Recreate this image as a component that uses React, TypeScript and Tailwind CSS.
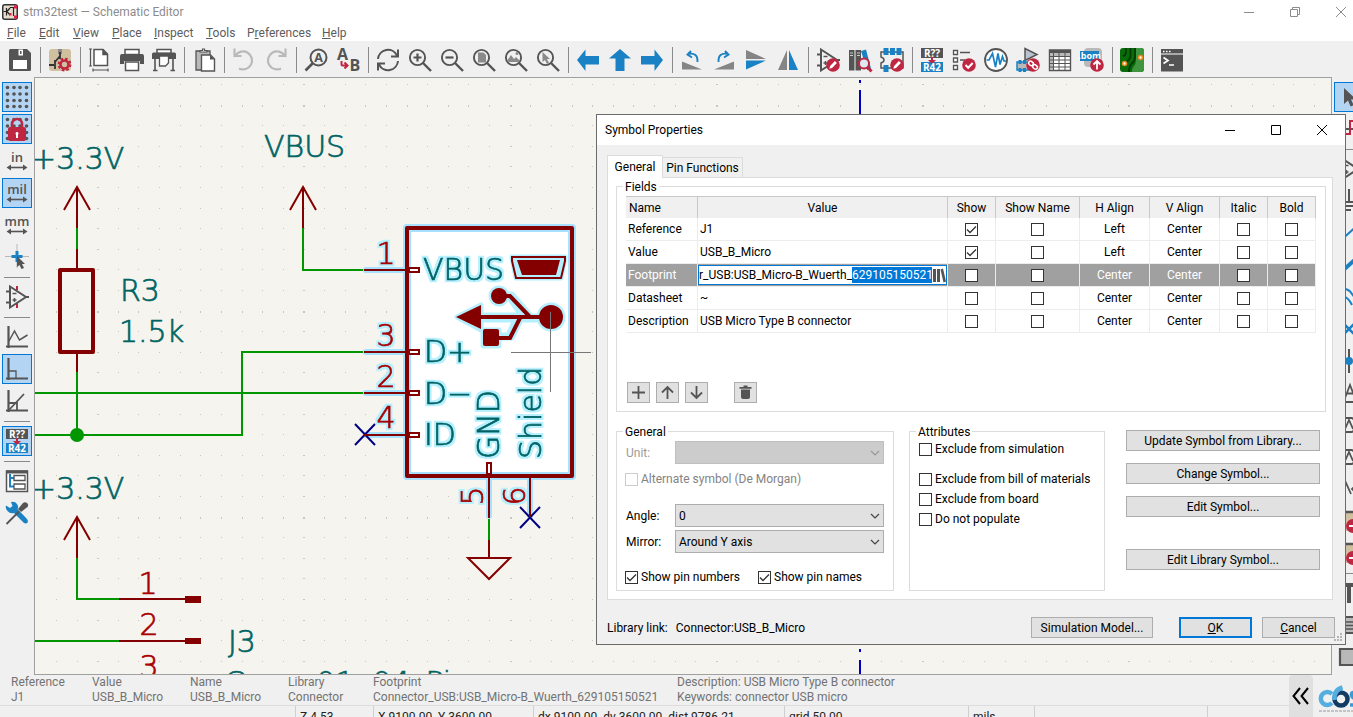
import React, { useEffect, useRef } from "react";

const G = "#545454";
const B = "#1a81c4";
const R = "#bf2641";
const L = "#b9b9b9";

/* ---------- icon drawings, 24 x 24 ---------- */

const lens = (
  <g fill="none" stroke={G} strokeWidth="1.9">
    <circle cx="9.5" cy="9.5" r="7.6" />
    <path d="M15 15l8 8" strokeWidth="2.4" />
  </g>
);
const badge = <circle cx="17" cy="17" r="6.8" fill={R} />;
const pencil = <path d="M13.3 20.7l.8-2.8 4.8-4.8 2 2-4.8 4.8z" fill="#fff" />;
const annotate = (
  <g>
    <rect x="1" y="0" width="22" height="10" fill={G} />
    <rect x="1" y="14" width="22" height="10" fill={B} />
    <path d="M11 9h2v3h3l-4 4-4-4h3z" fill={R} />
    <text x="12" y="8.7" fontSize="10" fontWeight="700" fill="#fff" textAnchor="middle" fontFamily="Open Sans, sans-serif">R??</text>
    <text x="12" y="22.8" fontSize="10" fontWeight="700" fill="#fff" textAnchor="middle" fontFamily="Open Sans, sans-serif">R42</text>
  </g>
);
const cursor = <path d="M7 3v16l4-3.5 2.6 6 3-1.3-2.6-5.8h5.2z" fill={G} />;
const dots = [3, 9.5, 15.5, 22].flatMap((x) =>
  [3, 9.5, 16, 22].map((y) => <circle key={x + "-" + y} cx={x - 0.5} cy={y - 0.5} r="1.8" fill={G} />)
);
const unit = (t: string) => (
  <g>
    <text x="12" y="13" fontSize="13" fontWeight="600" fill={G} textAnchor="middle" fontFamily="Open Sans, sans-serif">{t}</text>
    <path d="M4 18.5h16" stroke={G} strokeWidth="1.6" />
    <path d="M1.5 18.5l4.5-3v6zM22.5 18.5l-4.5-3v6z" fill={G} />
  </g>
);
const opamp = (
  <g fill="none" stroke={G} strokeWidth="2">
    <path d="M5 1.5v21L21 12z" />
    <path d="M1 6.5h4M1 17.5h4M21 12h3" />
    <path d="M7.5 8.5h4M7.5 15h4M9.5 13v4" strokeWidth="1.5" />
  </g>
);
const axes = <path d="M3.5 1v22M1 21.5h22" fill="none" stroke={G} strokeWidth="2.2" />;

const icons: Record<string, React.ReactNode> = {
  save: (
    <g>
      <path d="M2.5 1H19l4 4v16.5q0 1.5-1.5 1.5h-19Q1 23 1 21.5v-19Q1 1 2.5 1z" fill={G} />
      <path d="M10.5 1.5h4.5v6h-4.5z" fill="#fff" />
      <path d="M12 3h1.5v3H12z" fill={G} />
      <path d="M5 12h14v9H5z" fill="#fff" />
    </g>
  ),
  setup: (
    <g>
      <rect x="1" y="1" width="22" height="22" rx="3" fill="#cfc09f" />
      <path d="M10 1h4v5h-4z" fill="#8a8a8a" />
      <path d="M12 4v7M1 17h5M7 12v9M12 8l-5 6" stroke="#333" strokeWidth="1.8" />
      <circle cx="16.5" cy="16.5" r="4" fill="none" stroke={R} strokeWidth="2.6" />
      <circle cx="16.5" cy="16.5" r="5.8" fill="none" stroke={R} strokeWidth="2.2" strokeDasharray="2.5 2.05" />
    </g>
  ),
  page: (
    <g fill="none" stroke={G} strokeWidth="1.5">
      <path d="M6 1.5h9l4.5 4.5v11.5H6z" fill="#fff" />
      <path d="M15 1.5v5h4.5" fill={G} />
      <path d="M2.5 1v17M1 1h3M1 18h3M5 22h15M5 20.5v3M20 20.5v3" strokeWidth="1.2" />
    </g>
  ),
  print: (
    <g>
      <path d="M5 1.5h14v5H5z" fill="#fff" stroke={G} strokeWidth="1.5" />
      <path d="M2 6h20q2 0 2 2v8h-4v-3H4v3H0V8q0-2 2-2z" fill={G} />
      <path d="M5.5 14h13v8.5h-13z" fill="#fff" stroke={G} strokeWidth="1.5" />
    </g>
  ),
  plot: (
    <g>
      <path d="M5 1.5h14v4H5z" fill="#fff" stroke={G} strokeWidth="1.5" />
      <path d="M1.5 4.500h21Q24 4.500 24 6v5H0V6q0-1.500 1.500-1.500z" fill={G} />
      <path d="M7.5 8h9v7l-3 3h-6z" fill="#fff" stroke={G} strokeWidth="1.3" />
      <path d="M3 11v11M21 11v11M1 22.5h4.5M18.5 22.5H23" stroke={G} strokeWidth="1.6" />
    </g>
  ),
  paste: (
    <g>
      <path d="M4 3h14v19H4z" fill={L} stroke={G} strokeWidth="1.3" />
      <path d="M8 4V2.5h2.500V1h2v1.500H15V4z" fill="#fff" stroke={G} strokeWidth="1.2" />
      <path d="M9.5 7h9l4 4v12h-13z" fill="#fff" stroke={G} strokeWidth="1.4" />
      <path d="M18 7v4.5h4.5z" fill={G} />
    </g>
  ),
  undo: <path d="M2.5 0.5v7.5h7M3.5 7.5A9 9 0 1 1 7 20.5" fill="none" stroke={L} strokeWidth="2.2" />,
  redo: <path d="M21.5 0.5v7.5h-7M20.5 7.5A9 9 0 1 0 17 20.5" fill="none" stroke={L} strokeWidth="2.2" />,
  find: (
    <g>
      <circle cx="14.5" cy="9.5" r="8" fill="none" stroke={G} strokeWidth="2" />
      <path d="M9 15l-7.5 7.5" stroke={G} strokeWidth="2.6" />
      <text x="14.5" y="14" fontSize="12.5" fontWeight="700" fill={G} textAnchor="middle" fontFamily="Open Sans, sans-serif">A</text>
    </g>
  ),
  replace: (
    <g>
      <text x="1" y="11.5" fontSize="16" fontWeight="700" fill={G} fontFamily="Open Sans, sans-serif">A</text>
      <text x="13.5" y="23" fontSize="16" fontWeight="700" fill={G} fontFamily="Open Sans, sans-serif">B</text>
      <path d="M5.5 13v3.5q0 1 1 1H11M8.5 14.5l3 3-3 3" fill="none" stroke={R} strokeWidth="2" />
    </g>
  ),
  refresh: (
    <g fill="none" stroke={G} strokeWidth="2">
      <path d="M2 11A10 10 0 0 1 21 7.5M22 1.5V8.5h-7M22 13A10 10 0 0 1 3 16.5M2 22.5V15.5h7" />
    </g>
  ),
  zin: <g>{lens}<path d="M5.5 9.5h8M9.5 5.5v8" stroke={G} strokeWidth="2.2" /></g>,
  zout: <g>{lens}<path d="M5.5 9.5h8" stroke={G} strokeWidth="2.2" /></g>,
  zfit: <g>{lens}<path d="M6 4.5h5.5l2.5 2.5v7.5H6z" fill="#8a8a8a" /></g>,
  zobj: <g>{lens}<path d="M3 13l4-6 3 4 2-2 4 4q-1 1-2 1H5z" fill="#8a8a8a" /><circle cx="13" cy="5.5" r="1.5" fill="#8a8a8a" /></g>,
  zsel: <g>{lens}<path d="M6.5 4v10l2.5-2 2 4 2-1-2-4h3z" fill="#8a8a8a" /></g>,
  left: <path d="M1 12L9.5 1.5V8H23v8.5H9.5v6.5z" fill={B} />,
  up: <path d="M12 1L23 10.5h-6.5V23h-9V10.5H1z" fill={B} />,
  right: <path d="M23 12L14.5 1.5V8H1v8.5h13.5v6.5z" fill={B} />,
  ccw: <g><path d="M2 13.5v8h20z" fill="#858585" /><path d="M8 6q10-2 9.5 8M11 3L7.5 6.5 12 9.5" fill="none" stroke={B} strokeWidth="1.9" /></g>,
  cw: <g><path d="M22 13.5v8H2z" fill="#858585" /><path d="M16 6Q6 4 6.5 14M13 3l3.5 3.5L12 9.5" fill="none" stroke={B} strokeWidth="1.9" /></g>,
  mv: <g><path d="M2 2v9h20z" fill="#858585" /><path d="M2 21.5v-9h20z" fill={B} /></g>,
  mh: <g><path d="M2 22h9V2z" fill="#858585" /><path d="M22 22h-9V2z" fill={B} /></g>,
  symed: <g>{opamp}{badge}{pencil}</g>,
  browse: (
    <g>
      <path d="M1 2h5.5v20.5H1zM7.5 2H13v20.5H7.5z" fill={G} />
      <path d="M2 5h3M2 7.5h3M9 5h3M9 7.5h3" stroke="#ccc" />
      <path d="M13 3l5-1.5 5 19-4 1.5z" fill={B} />
      <circle cx="16" cy="15.5" r="5" fill="#dfe9f3" stroke={R} strokeWidth="2" />
      <path d="M19.5 19l4 4.5" stroke={R} strokeWidth="3" />
    </g>
  ),
  fped: (
    <g>
      <path d="M1 4h22v16H1v-5q3-1 3-3t-3-3z" fill="none" stroke={G} strokeWidth="1.5" />
      <path d="M3.5 0h5v7h-5zM10 0h5v7h-5zM16.5 0h5v7h-5zM3.5 17h5v7h-5z" fill={B} />
      {badge}{pencil}
    </g>
  ),
  annotate,
  erc: (
    <g>
      <path d="M1.5 2.5h4v4h-4zM1.5 10h4v4h-4zM1.5 17.5h4v4h-4z" fill="#fff" stroke={G} strokeWidth="1.3" />
      <path d="M8 4.5h10M8 12h5" stroke={G} strokeWidth="1.5" />
      {badge}<path d="M13.5 17l2.7 2.7 4.5-4.7" fill="none" stroke="#fff" strokeWidth="2" />
    </g>
  ),
  sim: (
    <g>
      <circle cx="12" cy="12" r="11" fill="#fff" stroke={G} strokeWidth="1.8" />
      <path d="M2.5 12h2.5L8.5 5.5 11.5 19 14 5.5l2 11 2.5-8 1.5 4.5h2" fill="none" stroke={B} strokeWidth="1.7" />
    </g>
  ),
  assign: (
    <g>
      <path d="M9 0.5v12L21 6.5z" fill="#b9c3cf" stroke={G} strokeWidth="1.5" />
      <path d="M1 14h15v8H1z" fill={L} stroke={B} strokeWidth="1.5" />
      <path d="M2.5 12h3v4h-3zM7 12h3v4H7zM2.5 20h3v4h-3zM7 20h3v4H7z" fill={B} />
      {badge}
      <g fill="none" stroke="#fff" strokeWidth="1.5"><rect x="12.5" y="13.5" width="5" height="3.8" rx="1.9" transform="rotate(40 15 15.4)" /><rect x="16.5" y="17" width="5" height="3.8" rx="1.9" transform="rotate(40 19 19)" /></g>
    </g>
  ),
  table: (
    <g>
      <path d="M1.5 2h21v20.5h-21z" fill="#fff" stroke={G} strokeWidth="1.4" />
      <path d="M2 2h20v3H2z" fill={G} />
      <path d="M2 5h20v3H2zM2 5h3v17H2z" fill={L} />
      <path d="M1.5 8.5h21M1.5 12h21M1.5 15.5h21M1.5 19h21M5.5 5v17M11 5v17M17 5v17" stroke={G} />
    </g>
  ),
  bom: (
    <g>
      <rect x="4" y="0" width="18" height="19" rx="4" fill={L} />
      <rect x="0" y="3" width="19" height="10" fill={B} />
      <text x="9.5" y="11" fontSize="9" fontWeight="700" fill="#fff" textAnchor="middle" fontFamily="Open Sans, sans-serif">.bom</text>
      {badge}<path d="M17 21.5v-8M13.5 16.5l3.5-3.5 3.5 3.5" fill="none" stroke="#fff" strokeWidth="1.8" />
    </g>
  ),
  pcb: (
    <g>
      <rect x="0" y="0" width="24" height="24" rx="3" fill="#0a6b0a" />
      <path d="M16 0h5q3 0 3 3v18q0 3-3 3h-9q0-4 2-6t2-6z" fill="#3f953f" />
      <path d="M6 0v4q0 3-3 4.5M10.5 0v7q0 4-3 6T4 17M15 0v9q0 4-3 6.5T9 24" fill="none" stroke="#023d02" strokeWidth="1.8" />
      <circle cx="4.5" cy="15.5" r="2" fill="#fff" stroke="#e8881a" strokeWidth="1.6" />
      <circle cx="20.5" cy="9.5" r="2" fill="#fff" stroke="#e8881a" strokeWidth="1.6" />
    </g>
  ),
  term: (
    <g>
      <path d="M1 1h22v22.5H1z" fill={G} />
      <path d="M1 6h22" stroke="#fff" />
      <path d="M3 3.5h1.5M6 3.5h1.5M9 3.5h1.5" stroke="#fff" strokeWidth="1.5" />
      <path d="M3.5 9.5l4.5 3-4.5 3M9 17h5" fill="none" stroke="#fff" strokeWidth="1.7" />
    </g>
  ),
  grid: <g>{dots}</g>,
  lock: (
    <g>
      {dots}
      <path d="M7 10V7a5 5 0 0 1 10 0v4" fill="none" stroke={R} strokeWidth="2.6" />
      <rect x="3" y="10" width="18" height="14" rx="2" fill={R} />
      <path d="M12 15a1.5 1.5 0 0 1 1 2.6V21h-2v-3.4A1.5 1.5 0 0 1 12 15z" fill="#fff" />
    </g>
  ),
  in: unit("in"),
  mil: unit("mil"),
  mm: unit("mm"),
  cross: (
    <g>
      <path d="M12 -1v24M0 11.5h24" stroke={L} />
      <path d="M12 6v11M6.5 11.5h11" stroke={B} strokeWidth="3" />
      <path d="M12 11v11l2.5-2 2 4 2.5-1-2-4h3z" fill={G} />
    </g>
  ),
  pins: <g><path d="M12 1v4M12 18v5" stroke={R} strokeWidth="2" />{opamp}</g>,
  free: <g>{axes}<path d="M4 16l5.5-10 5 9 8-5" fill="none" stroke={G} strokeWidth="1.5" /></g>,
  ninety: <g>{axes}<path d="M4 14h7v7" fill="none" stroke={G} strokeWidth="1.3" /></g>,
  fortyfive: <g>{axes}<path d="M4 21L19 5M4 14h8v7" fill="none" stroke={G} strokeWidth="1.8" /></g>,
  hier: (
    <g>
      <rect x="1.5" y="2" width="21" height="20.5" fill="#fff" stroke={G} strokeWidth="1.5" />
      <path d="M1 1.5h22v3H1z" fill={G} />
      <path d="M5 5v12.5h4M5 9h4" fill="none" stroke={B} strokeWidth="2" />
      <path d="M9 6.5h11v5H9zM9 15h11v5H9z" fill="#fff" stroke={G} strokeWidth="1.3" />
    </g>
  ),
  tools: (
    <g>
      <path d="M1 4.5l4 2.500 2.500-2L6 1q4-1 6 2t.5 5l9.500 10q1.500 2 .5 3.500t-3.500.5L9 12q-4 1-6.500-2T1 4.500z" fill={B} />
      <path d="M1.5 23L14 10.5" stroke={G} strokeWidth="1.8" />
      <path d="M13 8l5-6q2-1.5 4 0t.5 4L16 11z" fill={G} />
    </g>
  ),
  select: cursor,
  wave: <g fill="none"><path d="M0 12h24" stroke={G} strokeWidth="2" /><path d="M8 17h5V4H22" stroke={R} strokeWidth="2" /></g>,
  sym: opamp,
  pwr: <path d="M12 0v12M1 13h18M4 17h14M8 21h6" stroke={G} strokeWidth="2" />,
  wire: <path d="M2 21L22 3" stroke={B} strokeWidth="2" />,
  bus: <path d="M2 21L22 3" stroke={B} strokeWidth="4" />,
  entry: <path d="M1 4h6q5 0 8 5t8 5M1 12h6q4 0 8 8" fill="none" stroke={B} strokeWidth="2" />,
  nc: <path d="M6 6l12 12M18 6L6 18" stroke={B} strokeWidth="2.5" />,
  junction: <g><path d="M12 0v24" stroke={G} strokeWidth="2" /><circle cx="12" cy="12" r="4" fill={B} /></g>,
  label: <path d="M8 17l5-13 5 13M10 12.5h6M1 21h22" fill="none" stroke={G} strokeWidth="1.8" />,
  glabel: <path d="M1 5h14l8 7-8 7H1M8 16l4-9 4 9" fill="none" stroke={G} strokeWidth="1.8" />,
  hlabel: <path d="M22 5l-7 7 7 7M5 17L9 6l5 11" fill="none" stroke={G} strokeWidth="1.8" />,
  sheet: (
    <g>
      <rect x="0" y="2" width="24" height="20" fill="#cfc09f" />
      <path d="M0 3h24" stroke={G} strokeWidth="2.5" />
      <circle cx="16" cy="17" r="7" fill={R} />
      <path d="M12 17h8" stroke="#fff" strokeWidth="2" />
    </g>
  ),
  text: <path d="M2 4h20M12 4v18" stroke={G} strokeWidth="4" />,
  textbox: <g><path d="M1 4h22v16H1z" fill={L} stroke={G} strokeWidth="2" /><path d="M5 9h14M5 12.5h14M5 16h14" stroke={G} strokeWidth="1.5" /></g>,
  rect: <path d="M3 4h22v16H3z" fill={L} stroke={G} strokeWidth="2.2" />,
};

function Icon({ name }: { name: string }) {
  return (
    <svg viewBox="0 0 24 24" className="h-6 w-6 shrink-0 overflow-visible" aria-hidden="true">
      {icons[name]}
    </svg>
  );
}

const topTools =
  "save | setup | page print plot | paste | undo redo | find replace | refresh zin zout zfit zobj zsel | left up right | ccw cw mv mh | symed browse fped | annotate erc sim assign table bom | pcb | term".split(" ");
const leftTools =
  "grid lock in mil mm cross | pins | free ninety fortyfive | annotate | hier tools".split(" ");
const rightTools =
  "select wave | sym pwr wire bus entry nc junction label glabel glabel hlabel sheet sheet | text textbox rect".split(" ");
const activeTools = ["grid", "lock", "mil", "ninety", "annotate", "select"];

function SideBar({ tools, name }: { tools: string[]; name: string }) {
  return (
    <nav aria-label={name} className="flex w-[34px] shrink-0 flex-col items-center pt-1">
      {tools.map((t, i) =>
        t === "|" ? (
          <div key={i} className="flex h-2 w-full shrink-0 items-center px-1">
            <hr className="w-full border-[#8a8a8a]" />
          </div>
        ) : (
          <button
            key={i}
            aria-label={t}
            className={
              "my-px flex h-[30px] w-[30px] shrink-0 items-center justify-center border " +
              (activeTools.includes(t) ? "border-[#0078d7] bg-[#b3d5f3]" : "border-transparent")
            }
          >
            <Icon name={t} />
          </button>
        )
      )}
    </nav>
  );
}

/* ---------- schematic sheet ---------- */

const range = (n: number) => Array.from({ length: n }, (_, i) => i);

function GridDots() {
  return (
    <g fill="#c8c8c4" shapeRendering="crispEdges">
      {range(64).flatMap((i) =>
        range(30).map((j) => {
          const bx = (i + 8) % 10 === 0;
          const by = (j + 9) % 10 === 0;
          return (
            <rect
              key={i + "-" + j}
              x={Math.round(56 + i * 20.62)}
              y={Math.round(84 + j * 20.6)}
              width={bx ? 2 : 1}
              height={by ? 2 : 1}
            />
          );
        })
      )}
    </g>
  );
}

type LabelProps = { x: number; y: number; children: string; num?: boolean; turn?: boolean; halo?: boolean; mid?: boolean };

function Label({ x, y, children, num, turn, halo, mid }: LabelProps) {
  const colour = num ? "#a90000" : "#006464";
  return (
    <g filter={halo ? "url(#halo)" : undefined}>
      <text
        x={x}
        y={y}
        fontSize="30"
        fontWeight="200"
        textAnchor={mid ? "middle" : "start"}
        fill={colour}
        stroke={colour}
        strokeWidth="0.7"
        transform={turn ? `rotate(-90 ${x} ${y})` : undefined}
      >
        {children}
      </text>
    </g>
  );
}

function PowerArrow({ x, y }: { x: number; y: number }) {
  return <path d={`M${x} ${y + 41}V${y}M${x - 13} ${y + 23}L${x} ${y}l13 23`} stroke="#840000" strokeWidth="2" fill="none" />;
}

function Schematic() {
  return (
    <svg className="absolute inset-0 h-full w-full" fontFamily="DejaVu Sans, sans-serif" aria-label="Schematic sheet">
      <defs>
        <filter id="halo" x="-30%" y="-30%" width="160%" height="160%" colorInterpolationFilters="sRGB">
          <feMorphology in="SourceAlpha" operator="dilate" radius="2" result="fat" />
          <feFlood floodColor="#b4efff" />
          <feComposite in2="fat" operator="in" result="glow" />
          <feMerge>
            <feMergeNode in="glow" />
            <feMergeNode in="SourceGraphic" />
          </feMerge>
        </filter>
      </defs>
      <g transform="translate(-35 -78)">
        <GridDots />
        <path d="M860 80v3M860 90v550M860 649v3M860 660v20" stroke="#0000c0" strokeWidth="2" />
        <g fill="none" stroke="#009600" strokeWidth="2">
          <path d="M77 227v22M77 372v63M35 393h329M35 435h207v-83h122M77 557v42h42M35 641h84M303 227v43h61M489 519v22" />
        </g>
        <circle cx="77" cy="435" r="7" fill="#009600" />
        <g fill="none" stroke="#840000" strokeWidth="2">
          <path d="M77 249v20M77 353v19M119 599h67M119 641h67M489 540v18M468 558h42l-21 21z" />
          <rect x="60" y="270" width="33" height="82" strokeWidth="4" strokeLinejoin="round" />
        </g>
        <path d="M185 596h16v7h-16zM185 638h16v6h-16z" fill="#840000" />
        <PowerArrow x={77} y={187} />
        <PowerArrow x={77} y={517} />
        <PowerArrow x={303} y={187} />

        <g stroke="#a6e2ff" fill="none" strokeLinecap="round">
          <rect x="407" y="228" width="165" height="248" strokeWidth="8" fill="#fff" strokeLinejoin="round" />
          <path d="M366 270h41M366 352h41M366 393h41M366 435h41M489 476v40M530 476v40" strokeWidth="6" />
        </g>
        <path d="M355 424l20 21M375 424l-20 21M520 507l20 21M540 507l-20 21" stroke="#000084" strokeWidth="2" />

        <Label x={386} y={264} num halo mid>1</Label>
        <Label x={386} y={346} num halo mid>3</Label>
        <Label x={386} y={387} num halo mid>2</Label>
        <Label x={386} y={428} num halo mid>4</Label>
        <Label x={483} y={496} num halo mid turn>5</Label>
        <Label x={525} y={496} num halo mid turn>6</Label>
        <Label x={423} y={280} halo>VBUS</Label>
        <Label x={424} y={362} halo>D+</Label>
        <Label x={424} y={404} halo>D−</Label>
        <Label x={424} y={445} halo>ID</Label>
        <Label x={499} y={459} halo turn>GND</Label>
        <Label x={541} y={459} halo turn>Shield</Label>

        <g stroke="#b4efff" strokeWidth="5" strokeLinejoin="round" fill="#b4efff">
          <path d="M512 257h53l-4 21h-45z" />
          <path d="M457 317l24-12v10h40l-12-17h-10v-4h13l19 22h10v4h-20l-9 18h-13v8h-16v-16h16v5h9l7-15h-34v10z" />
          <circle cx="499" cy="296" r="8" />
          <circle cx="551" cy="317" r="12" />
        </g>
        <g fill="#840000">
          <path d="M517 260h43l-4 15h-34z" />
          <path d="M456 317l25-12v24z" />
          <circle cx="499" cy="296" r="8" />
          <circle cx="551" cy="317" r="12" />
          <rect x="483" y="329" width="16" height="17" rx="2" />
        </g>
        <g fill="none" stroke="#840000">
          <path d="M512 257h53v4l-4 17h-45l-4-17z" strokeWidth="2" />
          <path d="M480 317h62M499 296h11l20 21M499 338h11l10-20" strokeWidth="4" />
          <path d="M364 270h43M364 352h43M364 393h43M364 435h43M489 476v42M530 476v41" strokeWidth="2" />
          <rect x="407" y="228" width="165" height="248" strokeWidth="4" strokeLinejoin="round" />
        </g>
        <path d="M409 268h10v4h-10zM409 350h10v4h-10zM409 391h10v4h-10zM409 433h10v4h-10zM487 463h4v11h-4z" fill="#fff" stroke="#840000" strokeWidth="2" />
        <path d="M550.5 312v80M511 352.5h80" stroke="#777" strokeWidth="1" />

        <Label x={31} y={169}>+3.3V</Label>
        <Label x={120} y={301}>R3</Label>
        <Label x={119} y={342}>1.5k</Label>
        <Label x={31} y={499}>+3.3V</Label>
        <Label x={264} y={157}>VBUS</Label>
        <Label x={148} y={594} num mid>1</Label>
        <Label x={149} y={635} num mid>2</Label>
        <Label x={149} y={677} num mid>3</Label>
        <Label x={228} y={652}>J3</Label>
        <Label x={224} y={693}>Conn_01x04_Pin</Label>
      </g>
    </svg>
  );
}

/* ---------- dialog ---------- */

function Tick({ on, off, label, id }: { on?: boolean; off?: boolean; label?: string; id?: string }) {
  return (
    <span className="relative inline-block h-[13px] w-[13px] shrink-0 align-middle">
      <input
        type="checkbox"
        id={id}
        aria-label={label}
        defaultChecked={on}
        disabled={off}
        className="peer block h-[13px] w-[13px] appearance-none border border-[#333] bg-white disabled:border-[#ccc]"
      />
      <svg viewBox="0 0 13 13" className="pointer-events-none absolute inset-0 hidden h-full w-full peer-checked:block">
        <path d="M2 6.5l3 3 6-6" fill="none" stroke="#333" strokeWidth="1.3" />
      </svg>
    </span>
  );
}

function CheckRow({ id, text, on, off }: { id: string; text: string; on?: boolean; off?: boolean }) {
  return (
    <span className="flex h-5 items-center gap-[3px]">
      <Tick id={id} on={on} off={off} />
      <label htmlFor={id} className={off ? "text-[#838383]" : ""}>{text}</label>
    </span>
  );
}

function Pick({ id, value, off }: { id: string; value: string; off?: boolean }) {
  return (
    <span className="relative block flex-1">
      <select
        id={id}
        disabled={off}
        defaultValue={value}
        className="block h-[23px] w-full appearance-none border border-[#adadad] bg-[#e1e1e1] pr-5 pl-[3px] disabled:border-[#bfbfbf] disabled:bg-[#ccc]"
      >
        <option>{value}</option>
      </select>
      <svg viewBox="0 0 10 6" className="pointer-events-none absolute top-[9px] right-1 h-[6px] w-[10px]">
        <path d="M1 1l4 4 4-4" fill="none" stroke={off ? "#999" : "#444"} strokeWidth="1.2" />
      </svg>
    </span>
  );
}

function Group({ title, className, children }: { title: string; className: string; children: React.ReactNode }) {
  return (
    <section className={"relative border border-[#dcdcdc] " + className}>
      <h2 className="absolute -top-2 left-[6px] bg-white px-[2px] leading-4">{title}</h2>
      {children}
    </section>
  );
}

const btn = "h-[21px] border border-[#adadad] bg-[#e1e1e1] text-center leading-[18px]";

function SmallButton({ label, children }: { label: string; children: React.ReactNode }) {
  return (
    <button aria-label={label} className="flex h-[21px] w-[23px] items-center justify-center border border-[#adadad] bg-[#e1e1e1]">
      <svg viewBox="0 0 16 16" className="h-4 w-4" fill="none" stroke={G} strokeWidth="1.8">{children}</svg>
    </button>
  );
}

const rows = [
  { name: "Reference", value: "J1", show: true, h: "Left" },
  { name: "Value", value: "USB_B_Micro", show: true, h: "Left" },
  { name: "Footprint", value: "r_USB:USB_Micro-B_Wuerth_629105150521", show: false, h: "Center", sel: true },
  { name: "Datasheet", value: "~", show: false, h: "Center" },
  { name: "Description", value: "USB Micro Type B connector", show: false, h: "Center" },
];

function FootprintEditor({ value }: { value: string }) {
  const ref = useRef<HTMLInputElement>(null);
  useEffect(() => {
    const el = ref.current;
    if (!el) return;
    el.focus({ preventScroll: true });
    el.setSelectionRange(value.indexOf("629"), value.length);
  }, [value]);
  return (
    <span className="flex h-5 items-center border border-[#0078d7] bg-white text-black">
      <input
        ref={ref}
        aria-label="Footprint value"
        defaultValue={value}
        spellCheck={false}
        className="h-4 min-w-0 flex-1 outline-none selection:bg-[#0078d7] selection:text-white"
      />
      <button aria-label="Browse footprints" className="shrink-0">
        <svg viewBox="1 0 14 15" className="block h-[15px] w-[14px]" fill={G}>
          <path d="M2 1h3v13H2zM6 1h3v13H6zM9.500 1.500l2.500-1 3 13-2.500 1z" />
        </svg>
      </button>
    </span>
  );
}

const heads = ["Name", "Value", "Show", "Show Name", "H Align", "V Align", "Italic", "Bold"];

function FieldsTable() {
  return (
    <table className="w-full table-fixed border-separate border-spacing-0 text-center">
      <colgroup>
        <col className="w-[72px]" />
        <col />
        <col className="w-12" />
        <col className="w-[84px]" />
        <col className="w-[70px]" />
        <col className="w-[70px]" />
        <col className="w-12" />
        <col className="w-12" />
      </colgroup>
      <thead>
        <tr>
          {heads.map((h, i) => (
            <th
              key={h}
              className={"h-[22px] border-t border-r border-[#c8c8c8] bg-[#f0f0f0] p-0 font-normal " + (i === 0 ? "pl-[3px] text-left" : "")}
            >
              {h}
            </th>
          ))}
        </tr>
      </thead>
      <tbody>
        {rows.map((r) => {
          const td = "h-[23px] border-r border-b border-[#ececec] p-0 leading-4 " + (r.sel ? "bg-[#a0a0a0] text-white" : "");
          return (
            <tr key={r.name}>
              <td className={td + " pl-[2px] text-left"}>{r.name}</td>
              <td className={td + " text-left"}>
                {r.sel ? <FootprintEditor value={r.value} /> : <span className="pl-[2px]">{r.value}</span>}
              </td>
              <td className={td}><Tick on={r.show} label={r.name + " show"} /></td>
              <td className={td}><Tick label={r.name + " show name"} /></td>
              <td className={td}>{r.h}</td>
              <td className={td}>Center</td>
              <td className={td}><Tick label={r.name + " italic"} /></td>
              <td className={td}><Tick label={r.name + " bold"} /></td>
            </tr>
          );
        })}
      </tbody>
    </table>
  );
}

function SymbolProperties() {
  return (
    <div role="dialog" aria-label="Symbol Properties" className="absolute top-[114px] left-[596px] w-[750px] border border-[#6b6b6b] bg-[#f0f0f0] text-black">
      <header className="flex h-[30px] items-center justify-between bg-white pr-[17px] pl-2">
        <h1>Symbol Properties</h1>
        <span className="flex gap-[34px]">
          {["M1 6.5h10", "M1.5 1.5h9v9h-9z", "M1 1l10 10M11 1L1 11"].map((d, i) => (
            <button key={d} aria-label={["Minimize", "Maximize", "Close"][i]}>
              <svg viewBox="0 0 12 12" className="h-3 w-3" fill="none" stroke="#000"><path d={d} /></svg>
            </button>
          ))}
        </span>
      </header>
      <div className="pt-[10px] pr-3 pl-[10px]">
        <div role="tablist" className="flex items-end">
          <button role="tab" aria-selected="true" className="relative -mb-px h-[23px] w-14 border border-b-0 border-[#dcdcdc] bg-white pb-px">General</button>
          <button role="tab" aria-selected="false" className="h-5 w-20 border border-b-0 border-l-0 border-[#dcdcdc]">Pin Functions</button>
        </div>
        <div className="border border-[#dcdcdc] bg-white py-2 pr-[6px] pl-2">
          <Group title="Fields" className="pt-[9px] pr-[9px] pb-2 pl-[9px]">
            <FieldsTable />
            <div className="mt-[49px] flex gap-[6px] pl-px">
              <SmallButton label="Add field"><path d="M7.5 1v13M1 7.5h13" /></SmallButton>
              <SmallButton label="Move up"><path d="M7.5 14V2M2 7.500L7.500 2l5.500 5.500" /></SmallButton>
              <SmallButton label="Move down"><path d="M7.5 1v12M2 7.500L7.500 13l5.500-5.500" /></SmallButton>
              <span className="ml-5">
                <SmallButton label="Delete field">
                  <path d="M3 4.5h9V12q0 2-2 2H5q-2 0-2-2z" fill={G} stroke="none" />
                  <path d="M1.5 2.8h12M5.500 1.500h4" />
                </SmallButton>
              </span>
            </div>
          </Group>
          <div className="mt-[19px] flex">
            <Group title="General" className="h-[160px] w-[278px] pt-[9px] pr-[9px] pl-2">
              <div className="flex items-center text-[#9a9a9a]">
                <label htmlFor="unit" className="w-[50px] pl-px">Unit:</label>
                <Pick id="unit" value="" off />
              </div>
              <div className="mt-[5px]"><CheckRow id="alt" text="Alternate symbol (De Morgan)" off /></div>
              <div className="mt-[15px] flex items-center">
                <label htmlFor="angle" className="w-[50px] pl-px">Angle:</label>
                <Pick id="angle" value="0" />
              </div>
              <div className="mt-[3px] flex items-center">
                <label htmlFor="mirror" className="w-[50px] pl-px">Mirror:</label>
                <Pick id="mirror" value="Around Y axis" />
              </div>
              <div className="mt-[14px] grid grid-cols-[133px_1fr]">
                <CheckRow id="pnum" text="Show pin numbers" on />
                <CheckRow id="pname" text="Show pin names" on />
              </div>
            </Group>
            <Group title="Attributes" className="ml-[15px] h-[160px] w-[196px] pt-[7px] pl-[9px]">
              <CheckRow id="xsim" text="Exclude from simulation" />
              <div className="mt-[10px]">
                <CheckRow id="xbom" text="Exclude from bill of materials" />
                <CheckRow id="xbrd" text="Exclude from board" />
                <CheckRow id="dnp" text="Do not populate" />
              </div>
            </Group>
            <div className="-mt-px mr-[6px] ml-[21px] flex flex-1 flex-col gap-3">
              <button className={btn}>Update Symbol from Library...</button>
              <button className={btn}>Change Symbol...</button>
              <button className={btn}>Edit Symbol...</button>
              <button className={btn + " mt-5"}>Edit Library Symbol...</button>
            </div>
          </div>
        </div>
      </div>
      <footer className="relative flex items-center pt-[17px] pr-[10px] pb-[6px] pl-[10px]">
        <span>Library link:</span>
        <span className="ml-2 flex-1">Connector:USB_B_Micro</span>
        <button className={btn + " w-[122px]"}>Simulation Model...</button>
        <button className="ml-[26px] h-[21px] w-[73px] border-2 border-[#0078d7] bg-[#e1e1e1] leading-4"><u>O</u>K</button>
        <button className={btn + " ml-[10px] w-[73px]"}><u>C</u>ancel</button>
        <svg viewBox="0 0 9 9" className="absolute right-[2px] bottom-[2px] h-[9px] w-[9px]" fill="#b5b5b5">
          <path d="M6 0h2v2H6zM3 3h2v2H3zM6 3h2v2H6zM0 6h2v2H0zM3 6h2v2H3zM6 6h2v2H6z" />
        </svg>
      </footer>
    </div>
  );
}

/* ---------- window ---------- */

const menus = [
  ["", "F", "ile", "w-8"],
  ["", "E", "dit", "w-[34px]"],
  ["", "V", "iew", "w-[39px]"],
  ["", "P", "lace", "w-[42px]"],
  ["", "I", "nspect", "w-[52px]"],
  ["", "T", "ools", "w-[41px]"],
  ["P", "r", "eferences", "w-[75px]"],
  ["", "H", "elp", "w-10"],
];

const facts = [
  ["Reference", "J1", "w-[81px]"],
  ["Value", "USB_B_Micro", "w-[98px]"],
  ["Name", "USB_B_Micro", "w-[98px]"],
  ["Library", "Connector", "w-[85px]"],
  ["Footprint", "Connector_USB:USB_Micro-B_Wuerth_629105150521", "w-[304px]"],
  ["Description: USB Micro Type B connector", "Keywords: connector USB micro", "flex-1"],
];

const status = [
  ["", "w-[296px]"],
  ["Z 4.53", "w-[78px]"],
  ["X 9100.00  Y 3600.00", "w-[160px]"],
  ["dx 9100.00  dy 3600.00  dist 9786.21", "w-[251px]"],
  ["grid 50.00", "w-[184px]"],
  ["mils", "w-[66px]"],
  ["", "w-[173px]"],
];

export default function App() {
  return (
    <div className="relative flex h-screen w-full flex-col overflow-hidden bg-[#f0f0f0] font-['Roboto','Noto_Sans',sans-serif] text-[12px] leading-4 text-[#5c5c5c]">
      <header className="flex h-6 shrink-0 items-center bg-white pr-[6px] pl-[2px] text-[#8c8c8c]">
        <svg viewBox="0 0 16 16" className="h-4 w-4">
          <rect x="0.75" y="0.75" width="14.5" height="14.5" rx="2" fill="#e6dccb" stroke="#333" strokeWidth="1.5" />
          <path d="M1.5 7.5h3M4.5 4v7.5M5 7.5L8 4M5 7.5l3 3.5M8 3.500h3.500v8.500" fill="none" stroke="#222" strokeWidth="1.2" />
          <path d="M12 1.5h3v3h-3zM12 11.5h3v3h-3zM7 9h2.500v2.500H7z" fill="#d92349" />
        </svg>
        <h1 className="ml-[5px] flex-1">stm32test — Schematic Editor</h1>
        <span className="flex gap-[34px]">
          {["M1 6.5h10", "M1.5 3.5h7v7h-7zM3.5 3.5v-2h7v7h-2", "M1 1l10 10M11 1L1 11"].map((d, i) => (
            <button key={d} aria-label={["Minimize window", "Restore window", "Close window"][i]}>
              <svg viewBox="0 0 12 12" className="h-3 w-3" fill="none" stroke="#8c8c8c"><path d={d} /></svg>
            </button>
          ))}
        </span>
      </header>
      <nav aria-label="Menu" className="flex h-[17px] shrink-0 items-center bg-white pl-[7px]">
        {menus.map(([a, u, z, w]) => (
          <button key={u + z} className={"text-left " + w}>{a}<u>{u}</u>{z}</button>
        ))}
      </nav>
      <nav aria-label="Tools" className="flex h-9 shrink-0 items-center pt-[2px] pl-1">
        {topTools.map((t, i) =>
          t === "|" ? (
            <span key={i} className="flex w-2 shrink-0 justify-center"><span className="h-[26px] w-px bg-[#8a8a8a]" /></span>
          ) : (
            <button key={i} aria-label={t} className="flex h-8 w-8 shrink-0 items-center justify-center"><Icon name={t} /></button>
          )
        )}
      </nav>
      <main className="flex min-h-0 flex-1">
        <SideBar tools={leftTools} name="Display options" />
        <div className="relative flex-1 overflow-hidden border border-[#a0a0a0] bg-[#f5f4ef]">
          <Schematic />
        </div>
        <div className="w-[21px] shrink-0 overflow-hidden">
          <SideBar tools={rightTools} name="Placement" />
        </div>
      </main>
      <footer className="flex shrink-0">
        <div className="min-w-0 flex-1">
          <dl className="flex h-[31px] border-b border-[#dcdcdc] pl-[11px] leading-[15px] text-[#737373]">
            {facts.map(([k, v, w]) => (
              <div key={k} className={"shrink-0 whitespace-nowrap " + w}>
                <dt>{k}</dt>
                <dd>{v}</dd>
              </div>
            ))}
          </dl>
          <div className="-mb-3 flex h-[23px] text-[#222]">
            {status.map(([t, w], i) => (
              <span key={i} className={"shrink-0 border-r border-[#cfcfcf] pt-[3px] pl-1 whitespace-pre " + w}>{t}</span>
            ))}
          </div>
        </div>
        <div className="flex w-16 shrink-0 overflow-hidden">
          <button aria-label="Expand" className="flex w-6 shrink-0 items-center justify-center rounded-t bg-[#e0e0e0]">
            <svg viewBox="0 0 18 18" className="h-[18px] w-[18px]" fill="none" stroke="#000" strokeWidth="2"><path d="M8 1L1.5 9 8 17M16 1L9.5 9l6.5 8" /></svg>
          </button>
          <svg viewBox="0 0 40 42" className="ml-1 h-[42px] w-10 shrink-0" fill="none">
            <path d="M15 19a6.5 6.5 0 1 0 0 9" stroke="#54aee0" strokeWidth="4.5" />
            <circle cx="24" cy="24" r="6.5" stroke="#123a63" strokeWidth="4.5" />
            <path d="M17.5 25q-1-10 8-12.5" stroke="#54aee0" strokeWidth="4.5" />
            <path d="M42 18q-8-2-7.5 2t6.5 4-1 6h-7" stroke="#3b9ad6" strokeWidth="3.5" />
            <path d="M2 36h38" stroke="#b5b5b5" strokeWidth="1.5" strokeDasharray="3 1" />
          </svg>
        </div>
      </footer>
      <SymbolProperties />
    </div>
  );
}
